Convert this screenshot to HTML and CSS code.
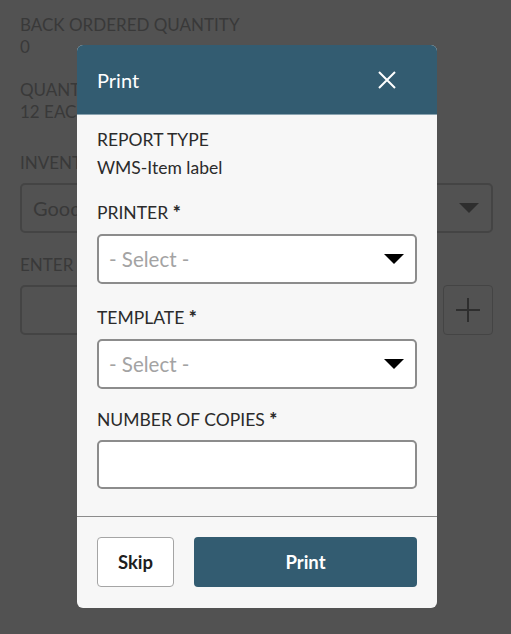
FILE: index.html
```html
<!DOCTYPE html>
<html>
<head>
<meta charset="utf-8">
<link rel="stylesheet" href="styles.css">
</head>
<body>
<div class="page">
  <div class="field">
    <div class="label">BACK ORDERED QUANTITY</div>
    <div class="value">0</div>
  </div>
  <div class="field field-wide">
    <div class="label">QUANTITY PICKED</div>
    <div class="value">12 EACH</div>
  </div>
  <div class="field">
    <div class="label">INVENTORY STATUS</div>
    <div class="bg-select">
      <span>Good</span>
      <svg class="bg-caret" width="20" height="10" viewBox="0 0 20 10"><path d="M0 0H20L10 10Z" fill="#2e2e2e"/></svg>
    </div>
  </div>
  <div class="field">
    <div class="label">ENTER QUANTITY</div>
    <div class="bg-row">
      <div class="bg-input"></div>
      <div class="bg-plus">
        <svg width="26" height="26" viewBox="0 0 26 26"><path d="M13 1V25M1 13H25" stroke="#2e2e2e" stroke-width="2"/></svg>
      </div>
    </div>
  </div>
</div>

<div class="dialog">
  <div class="dialog-header">
    <span class="dialog-title">Print</span>
    <svg class="close" width="18" height="18" viewBox="0 0 18 18"><path d="M1 1L17 17M17 1L1 17" stroke="#fff" stroke-width="2"/></svg>
  </div>
  <div class="dialog-body">
    <div class="ro-label">REPORT TYPE</div>
    <div class="ro-value">WMS-Item label</div>

    <div class="f-label">PRINTER <span class="req">*</span></div>
    <div class="select">
      <span class="placeholder">- Select -</span>
      <svg width="20" height="10" viewBox="0 0 20 10"><path d="M0 0H20L10 10Z" fill="#000"/></svg>
    </div>

    <div class="f-label">TEMPLATE <span class="req">*</span></div>
    <div class="select">
      <span class="placeholder">- Select -</span>
      <svg width="20" height="10" viewBox="0 0 20 10"><path d="M0 0H20L10 10Z" fill="#000"/></svg>
    </div>

    <div class="f-label f-label-tight">NUMBER OF COPIES <span class="req">*</span></div>
    <div class="text-input"></div>
  </div>
  <div class="dialog-footer">
    <button class="btn btn-skip">Skip</button>
    <button class="btn btn-print">Print</button>
  </div>
</div>
</body>
</html>
```

FILE: styles.css
```css
html, body {
  margin: 0;
  padding: 0;
}
body {
  width: 511px;
  height: 634px;
  background: #525252;
  font-family: Lato, "Open Sans", "Liberation Sans", sans-serif;
  position: relative;
  overflow: hidden;
}
.page {
  padding: 14px 18px 0 20px;
  color: #393939;
  font-size: 17px;
  display: flex;
  flex-direction: column;
  gap: 21px;
}
.field-wide {
  margin-bottom: 8px;
}
.field .label,
.field .value {
  line-height: 22px;
}
.bg-select {
  margin-top: 9px;
  height: 46px;
  border: 2px solid #444;
  border-radius: 5px;
  display: flex;
  align-items: center;
  justify-content: space-between;
  padding: 0 12px 0 11px;
  font-size: 20px;
}
.bg-row {
  margin-top: 9px;
  display: flex;
  justify-content: space-between;
}
.bg-input {
  width: 300px;
  height: 46px;
  border: 2px solid #444;
  border-radius: 5px;
}
.bg-plus {
  width: 48px;
  height: 48px;
  border: 1px solid #444;
  border-radius: 4px;
  display: flex;
  align-items: center;
  justify-content: center;
}

.dialog {
  position: absolute;
  left: 77px;
  top: 45px;
  width: 360px;
  background: #f7f7f7;
  border-radius: 6px;
  overflow: hidden;
}
.dialog-header {
  height: 69px;
  background: #335c71;
  border-bottom: 1px solid #8aa3b0;
  display: flex;
  align-items: center;
  justify-content: space-between;
  padding: 0 41px 0 20px;
}
.dialog-title {
  color: #fff;
  font-size: 20px;
}
.dialog-body {
  padding: 13px 20px 27px 20px;
  display: flex;
  flex-direction: column;
  color: #2b2b2b;
  font-size: 17.5px;
  border-bottom: 1px solid #8c8c8c;
}
.ro-label, .ro-value, .f-label {
  line-height: 24px;
  height: 24px;
}
.ro-value {
  margin-top: 4px;
}
.f-label {
  margin-top: 21px;
}
.f-label + .select {
  margin-top: 9px;
}
.f-label + .text-input {
  margin-top: 8px;
}
.select + .f-label {
  margin-top: 22px;
}
.select + .f-label-tight {
  margin-top: 19px;
}
.req {
  font-weight: 900;
  font-size: 19px;
  line-height: 0;
}
.select {
  height: 46px;
  border: 2px solid #8c8c8c;
  border-radius: 5px;
  background: #fff;
  display: flex;
  align-items: center;
  justify-content: space-between;
  padding: 0 11px 0 10px;
}
.placeholder {
  color: #a3a3a3;
  font-size: 20.5px;
}
.text-input {
  height: 45px;
  border: 2px solid #8c8c8c;
  border-radius: 5px;
  background: #fff;
}
.dialog-footer {
  padding: 20px 20px 21px 20px;
  display: flex;
  gap: 20px;
}
.btn {
  height: 50px;
  border-radius: 4px;
  font-family: Lato, "Open Sans", "Liberation Sans", sans-serif;
  font-size: 18.5px;
  font-weight: 700;
  cursor: pointer;
}
.btn-skip {
  width: 77px;
  background: #fff;
  color: #1e1e1e;
  border: 1px solid #a5a5a5;
}
.btn-print {
  flex: 1;
  background: #335c71;
  color: #fff;
  border: none;
}
```
